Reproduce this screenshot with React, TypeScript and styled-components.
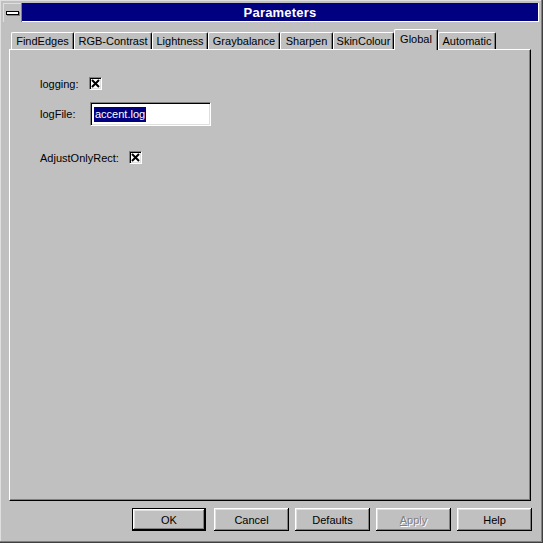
import React from "react";
import styled, { createGlobalStyle } from "styled-components";

const GlobalStyle = createGlobalStyle`
  html, body {
    margin: 0;
    padding: 0;
    background: #c0c0c0;
  }
  * {
    box-sizing: border-box;
  }
`;

const tabs = [
  { label: "FindEdges", width: 63 },
  { label: "RGB-Contrast", width: 78 },
  { label: "Lightness", width: 56 },
  { label: "Graybalance", width: 72 },
  { label: "Sharpen", width: 53 },
  { label: "SkinColour", width: 61 },
  { label: "Global", width: 44, active: true },
  { label: "Automatic", width: 58 },
];

const Check = () => (
  <CheckBox>
    <svg width="9" height="9" viewBox="0 0 9 9">
      <path d="M1 1 L8 8 M8 1 L1 8" stroke="#000" strokeWidth="2" />
    </svg>
  </CheckBox>
);

const App = () => {
  return (
    <Window>
      <GlobalStyle />
      <TitleRow>
        <SysMenu>
          <SysBar />
        </SysMenu>
        <TitleBar>Parameters</TitleBar>
      </TitleRow>

      <TabStrip>
        {tabs.map((t) => (
          <Tab key={t.label} $width={t.width} $active={!!t.active}>
            {t.label}
          </Tab>
        ))}
      </TabStrip>

      <Panel>
        <Row $top={0} $height={13}>
          <Label $width={49}>logging:</Label>
          <Check />
        </Row>
        <Row $top={12} $height={24}>
          <Label $width={50}>logFile:</Label>
          <TextField>
            <Selected>accent.log</Selected>
          </TextField>
        </Row>
        <Row $top={25} $height={13}>
          <Label $width={89}>AdjustOnlyRect:</Label>
          <Check />
        </Row>
      </Panel>

      <ButtonRow>
        <DefaultFrame>
          <Button>OK</Button>
        </DefaultFrame>
        <Button>Cancel</Button>
        <Button>Defaults</Button>
        <Button $disabled>
          <u>A</u>pply
        </Button>
        <Button>Help</Button>
      </ButtonRow>
    </Window>
  );
};

export default App;

const Window = styled.div`
  width: 543px;
  height: 543px;
  display: flex;
  flex-direction: column;
  padding: 3px 4px 0 3px;
  background: #c0c0c0;
  box-shadow: inset -1px -1px #404040, inset -2px -2px #808080,
    inset 1px 1px #dfdfdf;
  font-family: "Liberation Sans", Arial, sans-serif;
  font-size: 11px;
  color: #000;
`;

const TitleRow = styled.div`
  display: flex;
  height: 19px;
`;

const SysMenu = styled.div`
  width: 19px;
  height: 19px;
  display: flex;
  align-items: center;
  justify-content: center;
  background: #c0c0c0;
  border-right: 1px solid #808080;
  box-shadow: inset 1px 1px #dfdfdf;
`;

const SysBar = styled.div`
  width: 13px;
  height: 4px;
  background: #fff;
  border: 1px solid #000;
  box-shadow: 1px 1px #808080;
`;

const TitleBar = styled.div`
  flex: 1;
  display: flex;
  align-items: center;
  justify-content: center;
  background: #000080;
  color: #fff;
  font-weight: bold;
  font-size: 13px;
  letter-spacing: 0.2px;
  border-right: 1px solid #fff;
  border-bottom: 1px solid #fff;
  padding-top: 1px;
`;

const TabStrip = styled.div`
  display: flex;
  align-items: flex-end;
  height: 20px;
  margin-top: 7px;
  padding-left: 8px;
  position: relative;
  z-index: 1;
`;

const Tab = styled.div<{ $width: number; $active: boolean }>`
  width: ${(p) => p.$width}px;
  height: ${(p) => (p.$active ? 21 : 17)}px;
  margin-bottom: ${(p) => (p.$active ? -1 : 0)}px;
  display: flex;
  align-items: center;
  justify-content: center;
  padding-bottom: ${(p) => (p.$active ? 3 : 0)}px;
  background: #c0c0c0;
  border-top: 1px solid #fff;
  border-left: 1px solid #fff;
  border-right: 1px solid #000;
  border-radius: 2px 2px 0 0;
  box-shadow: inset -1px 0 #808080;
  white-space: nowrap;
`;

const Panel = styled.div`
  flex: 1;
  display: flex;
  flex-direction: column;
  margin: 0 8px 0 6px;
  padding: 27px 0 0 30px;
  border-top: 1px solid #fff;
  border-left: 1px solid #fff;
  border-right: 1px solid #000;
  border-bottom: 1px solid #000;
  box-shadow: inset -1px -1px #808080;
`;

const Row = styled.div<{ $top: number; $height: number }>`
  display: flex;
  align-items: center;
  height: ${(p) => p.$height}px;
  margin-top: ${(p) => p.$top}px;
`;

const Label = styled.span<{ $width: number }>`
  width: ${(p) => p.$width}px;
  white-space: nowrap;
`;

const CheckBox = styled.div`
  width: 13px;
  height: 13px;
  display: flex;
  align-items: center;
  justify-content: center;
  background: #fff;
  border-top: 1px solid #808080;
  border-left: 1px solid #808080;
  border-right: 1px solid #fff;
  border-bottom: 1px solid #fff;
  box-shadow: inset 1px 1px #000, inset -1px -1px #dfdfdf;
`;

const TextField = styled.div`
  width: 121px;
  height: 24px;
  display: flex;
  align-items: center;
  padding-left: 3px;
  background: #fff;
  border-top: 1px solid #808080;
  border-left: 1px solid #808080;
  border-right: 1px solid #fff;
  border-bottom: 1px solid #fff;
  box-shadow: inset 1px 1px #000, inset -1px -1px #dfdfdf;
`;

const Selected = styled.span`
  background: #000080;
  color: #fff;
  line-height: 15px;
  padding: 0 1px;
  font-size: 11px;
`;

const ButtonRow = styled.div`
  display: flex;
  justify-content: flex-end;
  align-items: center;
  gap: 6px;
  height: 42px;
  padding: 7px 7px 12px 0;
`;

const DefaultFrame = styled.div`
  border: 1px solid #000;
  display: flex;
  margin-right: 2px;
`;

const Button = styled.div<{ $disabled?: boolean }>`
  width: 75px;
  height: 23px;
  display: flex;
  align-items: center;
  justify-content: center;
  background: #c0c0c0;
  color: ${(p) => (p.$disabled ? "#808080" : "#000")};
  text-shadow: ${(p) => (p.$disabled ? "1px 1px #fff" : "none")};
  box-shadow: inset -1px -1px #000, inset 1px 1px #fff,
    inset -2px -2px #808080, inset 2px 2px #dfdfdf;
  ${DefaultFrame} & {
    width: 72px;
    height: 21px;
  }
`;
